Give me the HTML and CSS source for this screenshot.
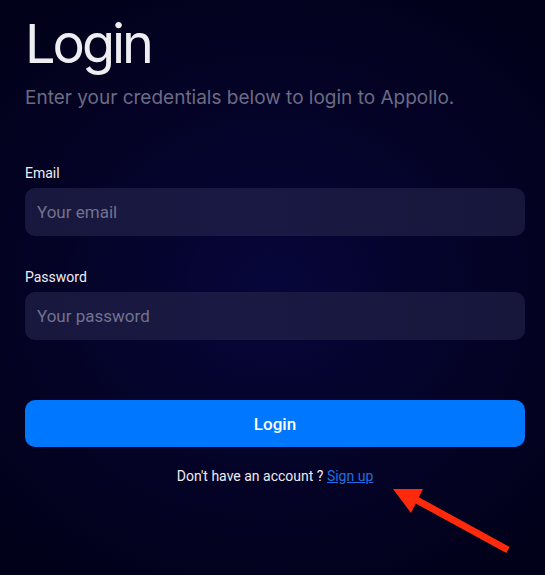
FILE: index.html
```html
<!DOCTYPE html>
<html lang="en">
<head>
<meta charset="utf-8">
<title>Login</title>
<link rel="stylesheet" href="styles.css">
</head>
<body>
<main class="page">
  <h1 class="title">Login</h1>
  <p class="subtitle">Enter your credentials below to login to Appollo.</p>
  <form class="form">
    <label class="field">
      <span class="label">Email</span>
      <input class="input" type="email" placeholder="Your email">
    </label>
    <label class="field">
      <span class="label">Password</span>
      <input class="input" type="password" placeholder="Your password">
    </label>
    <button class="btn" type="button">Login</button>
  </form>
  <p class="footer">Don't have an account ? <a class="link" href="#">Sign up</a></p>
  <svg class="arrow" width="140" height="90" viewBox="0 0 140 90" aria-hidden="true">
    <line x1="128" y1="75" x2="22" y2="17" stroke="#ff2a0c" stroke-width="7" stroke-linecap="butt"/>
    <polygon points="13,14 43,14 31,38" fill="#ff2a0c"/>
  </svg>
</main>
</body>
</html>
```
FILE: styles.css
```css
html, body {
  margin: 0;
  padding: 0;
  height: 100%;
}
body {
  background: radial-gradient(ellipse 70% 60% at 50% 50%, #07063a 0%, #040327 55%, #02011a 100%);
  font-family: Roboto, "Noto Sans", sans-serif;
  color: #f0f0f4;
}
.page {
  position: relative;
  padding: 11px 20px 0 25px;
  height: 575px;
  box-sizing: border-box;
}
.title {
  font-family: Inter, sans-serif;
  font-weight: 400;
  font-size: 54px;
  line-height: 65px;
  margin: 0;
  color: #eeeef2;
  letter-spacing: -3px;
}
.subtitle {
  font-family: Inter, sans-serif;
  font-size: 19px;
  line-height: 23px;
  margin: 10px 0 0;
  color: #6c6b84;
}
.form {
  display: flex;
  flex-direction: column;
  margin-top: 55px;
}
.field {
  display: flex;
  flex-direction: column;
  margin-bottom: 32px;
}
.label {
  font-size: 14px;
  line-height: 18px;
  color: #eeeef4;
  margin-bottom: 6px;
}
.input {
  height: 48px;
  box-sizing: border-box;
  border: none;
  outline: none;
  border-radius: 10px;
  background: linear-gradient(90deg, #18173d 0%, #1a1944 45%, #17163b 100%);
  padding: 0 12px;
  font-family: Roboto, sans-serif;
  font-size: 17px;
  color: #eee;
}
.input::placeholder {
  color: #73728e;
}
.btn {
  margin-top: 28px;
  height: 47px;
  border: none;
  border-radius: 10px;
  background: #0077ff;
  color: #ffffff;
  font-family: Roboto, sans-serif;
  font-weight: 500;
  font-size: 17px;
}
.footer {
  text-align: center;
  font-size: 14px;
  margin: 21px 0 0;
  color: #ececf2;
}
.link {
  color: #1f6fe0;
  text-decoration: underline;
}
.arrow {
  position: absolute;
  left: 380px;
  top: 475px;
}
```
